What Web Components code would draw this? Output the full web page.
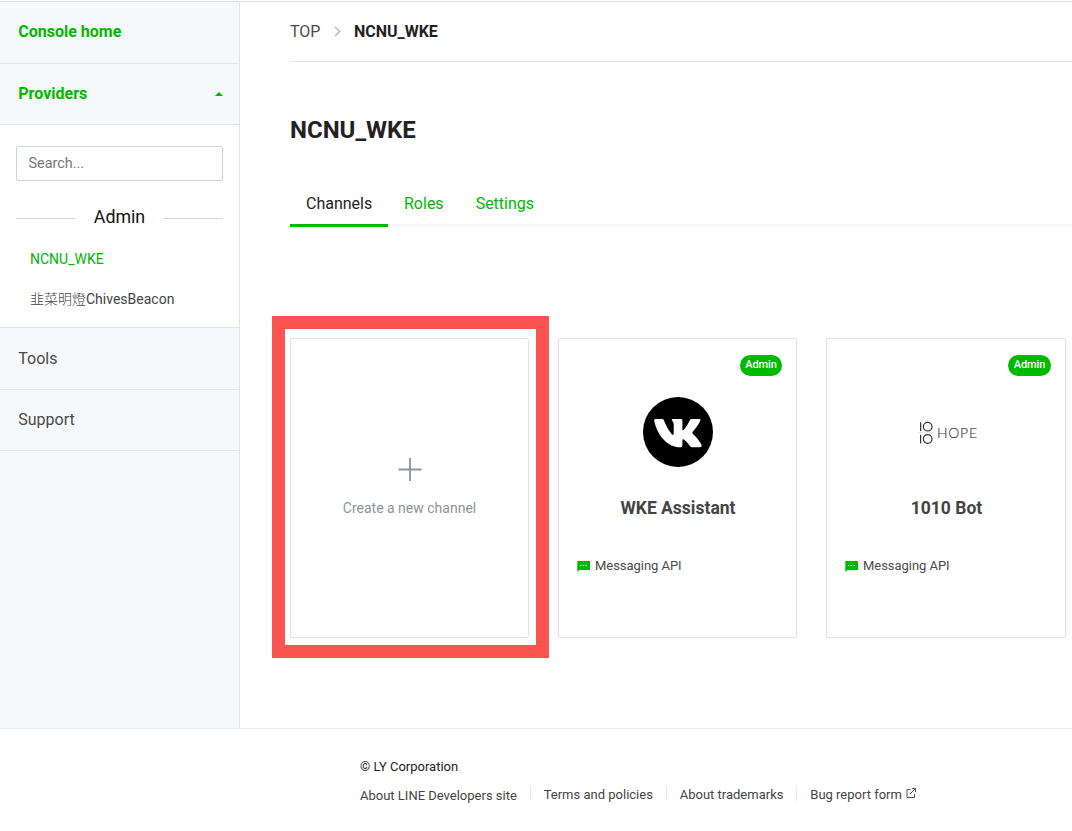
<!DOCTYPE html>
<html lang="en">
<head>
<meta charset="utf-8">
<title>NCNU_WKE | LINE Developers</title>
<style>
html,body{margin:0;height:100%;overflow:hidden;background:#fff}
body{font-family:Roboto,"Noto Sans CJK TC",sans-serif;font-size:16px;line-height:20px;color:#4a4a4a}
</style>
</head>
<body>
<dev-console></dev-console>
<script>
function define(name, html) {
  const template = document.createElement('template');
  template.innerHTML = '<style>*{box-sizing:border-box}</style>' + html;
  customElements.define(name, class extends HTMLElement {
    constructor() {
      super();
      this.attachShadow({mode: 'open'}).append(template.content.cloneNode(true));
    }
  });
}

define('nav-item', `<style>
:host{display:flex;box-sizing:border-box;height:62px;padding:0 16px 0 18.300px;align-items:center;justify-content:space-between;border-bottom:1px solid #dfe3ec;background:#f7f8fa}
:host([active]){color:#00b900;font-weight:700;padding-bottom:1px}
:host([short]){height:61px;padding-bottom:1px}
</style><span><slot></slot></span><slot name="icon"></slot>`);

define('provider-list', `<style>
:host{display:block;box-sizing:border-box;height:203px;padding:21px 16px 0;border-bottom:1px solid #dfe3ec;background:#fff}
input{display:block;width:207px;height:35px;padding:0 11px 1px 11.500px;border:1px solid #cdd2db;border-radius:2px;font:14.4px Roboto,sans-serif;outline:0;background:#fff}
input::placeholder{color:#777}
.admin{display:grid;grid-template-columns:59px 1fr 59px;align-items:center;margin-top:24px;height:24px;font-size:17.800px;color:#111;text-align:center}
i{height:1px;background:#d1d4da;margin-top:3px}
.name{height:20px;font-size:14px;line-height:20px;margin:20px 0 0 14px;color:#444}
.on{color:#00b900}
.han{font-weight:300}
</style>
<input placeholder="Search..." aria-label="Search">
<div class="admin"><i></i><span>Admin</span><i></i></div>
<div class="name on">NCNU_WKE</div><div class="name"><span class="han">韭菜明燈</span>ChivesBeacon</div>`);

define('side-bar', `<style>
:host{display:block;box-sizing:border-box;width:240px;flex:none;border-right:1px solid #dfe3ec;background:#f7f8fa}
svg{display:block}
</style>
<nav-item active>Console home</nav-item>
<nav-item active short>Providers<svg slot="icon" width="8" height="4" viewBox="0 0 8 4"><path d="M0 4 4 0l4 4z" fill="#00b900"/></svg></nav-item>
<provider-list></provider-list>
<nav-item>Tools</nav-item>
<nav-item short>Support</nav-item>`);

define('bread-crumb', `<style>
:host{display:flex;box-sizing:border-box;height:60px;border-bottom:1px solid #e8e8e8;align-items:center}
svg{margin:0 13px 0 13.500px}
b{color:#222}
</style><span>TOP</span><svg width="7" height="11" viewBox="0 0 7 11" fill="none" stroke="#b0b5bb" stroke-width="1.3"><path d="m1 1 4.7 4.5L1 10"/></svg><b>NCNU_WKE</b>`);

define('tab-bar', `<style>
:host{display:flex;box-sizing:border-box;height:47px;box-shadow:inset 0 -3px #f8f8f8;color:#00b900}
span{display:block;height:47px;padding:14px 16px 0}
.on{color:#222;border-bottom:3px solid #00b900;width:98px}
</style><span class="on">Channels</span><span>Roles</span><span>Settings</span>`);

define('create-card', `<style>
:host{display:flex;position:relative;box-sizing:border-box;flex-direction:column;align-items:center;width:239px;height:300px;padding-top:119px;border:1px solid #dfe0e5;border-radius:2px;font-size:14px;color:#8d949d}
svg{display:block;margin-bottom:16px}
.mark{position:absolute;left:-19px;top:-23px;width:277px;height:342px;border:13px solid #fa5350}
</style><svg width="24" height="24" viewBox="0 0 24 24" stroke="#8c939c" stroke-width="1.8"><path d="M.5 11.500h23M12 0v23"/></svg><span><slot></slot></span><div class="mark"></div>`);

define('channel-card', `<style>
:host{display:flex;position:relative;box-sizing:border-box;flex-direction:column;align-items:center;width:239px;height:300px;padding-top:58px;border:1px solid #dfe0e5;border-radius:2px}
:host([wide]){width:240px}
.badge{position:absolute;right:14px;top:16px;width:42px;height:21px;border-radius:11px;background:#00b900;color:#fff;font-size:11px;line-height:19px;font-weight:500;text-align:center;letter-spacing:-.15px}
:host([wide]) .badge{width:43px}
.logo{height:70px}
.title{margin-top:31px;padding-left:1px;font-size:17.500px;line-height:20px;font-weight:700;color:#444}
.api{display:flex;align-self:stretch;align-items:center;gap:5px;margin:38px 0 0 18px;font-size:13px;letter-spacing:-.04px;color:#4a4a4a}
.api svg{margin-top:1px}
</style><span class="badge">Admin</span><div class="logo"><slot name="logo"></slot></div><div class="title"><slot></slot></div>
<div class="api"><svg width="13" height="11" viewBox="0 0 13 11"><path d="M.3 0H13v9H2.5L.3 11z" fill="#00b900"/><path d="M3 4.5h1.5m1.2 0h1.5m1.2 0h1.5" stroke="#c9efc9"/></svg><span>Messaging API</span></div>`);

define('page-main', `<style>
:host{display:block;flex:1;min-width:0;padding-left:50px}
h1{margin:58px 0 0;height:20px;font-size:24px;line-height:20px;color:#222}
tab-bar{margin-top:40px}
.cards{display:flex;gap:29px;margin-top:111px}
.cards>*{flex:none}
svg{display:block}
</style>
<bread-crumb></bread-crumb><h1>NCNU_WKE</h1><tab-bar></tab-bar>
<div class="cards">
<create-card>Create a new channel</create-card>
<channel-card>WKE Assistant<svg slot="logo" width="70" height="70" viewBox="0 0 70 70"><circle cx="35" cy="35" r="35"/><path fill="#fff" d="M12.500 22h6.800q1.100 0 1.500 1c2.200 6 5.200 11 8.200 14.500q1.500 1.200 1.700-1V27q0-2-1.700-3.500-.7-1.500.8-1.500h8.300q1.300 0 1.300 1.500v9q0 1.500 1.200.5c2.600-3 4.600-6.200 6.300-9.700q.6-1.300 1.900-1.300h7.700q1.500 0 .8 1.800c-1.700 3.900-4.300 7.300-7.500 10.700q-1.100 1.300.1 2.500c3.300 3 6.200 6.400 8.400 10.300q1.300 3-1.500 3h-7.600q-1.400 0-2.300-1.200c-2-2.900-3.800-5-6.100-6.500-1.200-.6-1.400 0-1.400 1.200v4.500q0 2-2 2C24.500 50.500 14.500 38.500 11.200 24Q10.800 22 12.500 22z"/></svg></channel-card>
<channel-card wide>1010 Bot<svg slot="logo" width="70" height="70" viewBox="0 0 70 70" fill="#393230" font-family="Lato,sans-serif"><path d="M6 35.600h18" stroke="#dedede" stroke-width=".7"/><path d="M9.600 25.300v8.700M9.600 37.800v8.700" stroke="#393230" stroke-width="1.200"/><g fill="none" stroke="#393230" stroke-width="1.200"><circle cx="16.700" cy="29.700" r="4.300"/><circle cx="16.700" cy="42" r="4.300"/></g><text x="26" y="40.700" font-size="14" font-weight="300" fill="#3f3836" stroke="#3f3836" stroke-width=".15" textLength="40">HOPE</text></svg></channel-card>
</div>`);

define('page-footer', `<style>
:host{display:block;box-sizing:border-box;height:103px;padding:28px 0 0 360px;border-top:1px solid #ebebeb;font-size:13px;line-height:20px;color:#444}
.copy{color:#222}
.links{display:flex;margin-top:9px}
.links span{display:flex;height:15px;line-height:17px;padding:0 12.850px 0 13px;border-left:1px solid #e9e9e9}
.links span:first-child{padding-left:0;border:0;line-height:19px}
svg{margin:2px 0 0 4px}
</style><div class="copy">© LY Corporation</div><div class="links"><span>About LINE Developers site</span><span>Terms and policies</span><span>About trademarks</span><span>Bug report form<svg width="10" height="10" viewBox="0 0 10 10" fill="none" stroke="#555"><path d="M4.500 1.500H1v8h7.500V6M6 .5h3.500V4M9.500.5 4 6"/></svg></span></div>`);

define('dev-console', `<style>
:host{display:flex;box-sizing:border-box;height:831px;flex-direction:column;padding-top:1px}
.body{display:flex;height:727px;flex:none;border-top:1px solid #e0e1e3}
</style><div class="body"><side-bar></side-bar><page-main></page-main></div><page-footer></page-footer>`);
</script>
</body>
</html>
